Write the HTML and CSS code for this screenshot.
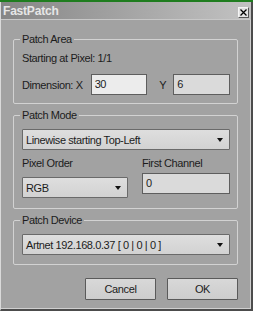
FILE: index.html
```html
<!DOCTYPE html>
<html lang="en">
  <head>
    <meta charset="UTF-8" />
    <title>FastPatch</title>
    <link rel="stylesheet" href="styles.css">
  </head>
  <body>
    <div class="top-strip"></div>
    <div class="window">
      <div class="titlebar">
        <span class="title">FastPatch</span>
        <span class="close-btn">
          <svg width="9" height="9" viewBox="0 0 9 9">
            <path d="M1.5 1.5 L7.5 7.5 M7.5 1.5 L1.5 7.5" stroke="#000" stroke-width="1.3" />
          </svg>
        </span>
      </div>
      <div class="content">
        <div class="group area-group">
          <div class="group-title">Patch Area</div>
          <p class="info">Starting at Pixel: 1/1</p>
          <div class="dim-row">
            <span class="dim-label">Dimension: X</span>
            <div class="text-input">30</div>
            <span class="y-label">Y</span>
            <div class="text-input disabled">6</div>
          </div>
        </div>

        <div class="group mode-group">
          <div class="group-title">Patch Mode</div>
          <div class="dropdown">
            <span>Linewise starting Top-Left</span>
            <span class="arrow"></span>
          </div>
          <div class="order-row">
            <div class="col col-order">
              <p class="col-label">Pixel Order</p>
              <div class="dropdown">
                <span>RGB</span>
                <span class="arrow"></span>
              </div>
            </div>
            <div class="col col-channel">
              <p class="col-label">First Channel</p>
              <div class="text-input disabled">0</div>
            </div>
          </div>
        </div>

        <div class="group device-group">
          <div class="group-title">Patch Device</div>
          <div class="dropdown">
            <span>Artnet 192.168.0.37 [ 0 | 0 | 0 ]</span>
            <span class="arrow"></span>
          </div>
        </div>

        <div class="buttons">
          <button class="btn">Cancel</button>
          <button class="btn">OK</button>
        </div>
      </div>
    </div>
  </body>
</html>
```

FILE: styles.css
```css
body {
  margin: 0;
  padding: 0;
  background-color: #a2a2a2;
  font-family: "Liberation Sans", Arial, sans-serif;
  font-size: 11px;
  letter-spacing: -0.4px;
  color: #1c1c1c;
}
.top-strip {
  height: 2px;
  background-color: #1f7d1f;
}
.window {
  box-sizing: border-box;
  width: 253px;
  height: 309px;
  background-color: #a2a2a2;
  border-left: 1px solid #dadada;
  border-right: 2px solid #4c4c4c;
  border-bottom: 2px solid #4c4c4c;
  box-shadow: inset -1px -1px 0 #cfcfcf;
}
.titlebar {
  height: 17px;
  display: flex;
  align-items: center;
  justify-content: space-between;
  padding: 0 2px 0 2px;
  background: linear-gradient(to right, #868686, #c2c2c2);
  border-bottom: 1px solid #c8c8c8;
}
.title {
  font-size: 12px;
  font-weight: bold;
  letter-spacing: -0.2px;
  color: #e6e6e6;
}
.close-btn {
  box-sizing: border-box;
  width: 11px;
  height: 11px;
  margin-top: 4px;
  display: flex;
  align-items: center;
  justify-content: center;
  background-color: #e2e2e2;
  border: 1px solid #f4f4f4;
  border-right-color: #555;
  border-bottom-color: #555;
}
.content {
  padding: 0 13px 0 12px;
}
.group {
  border: 1px solid #d2d2d2;
  border-radius: 2px;
  padding: 0 7px 0 8px;
}
.group-title {
  width: fit-content;
  margin: -8px 0 0 -2px;
  padding: 0 2px;
  line-height: 14px;
  background-color: #a2a2a2;
}
.area-group {
  margin-top: 19px;
  padding-bottom: 8px;
}
.mode-group {
  margin-top: 11px;
  padding-bottom: 10px;
}
.device-group {
  margin-top: 11px;
  padding-bottom: 9px;
}
.info {
  margin: 5px 0 0;
  line-height: 14px;
}
.dim-row {
  display: flex;
  align-items: center;
  margin-top: 9px;
}
.dim-label {
  width: 69px;
}
.y-label {
  box-sizing: border-box;
  width: 26px;
  padding-left: 12px;
}
.text-input {
  box-sizing: border-box;
  width: 57px;
  height: 21px;
  line-height: 19px;
  padding-left: 3px;
  background-color: #ececec;
  border: 1px solid #5e5e5e;
}
.text-input.disabled {
  background-color: #dadada;
}
.dropdown {
  box-sizing: border-box;
  height: 21px;
  display: flex;
  align-items: center;
  justify-content: space-between;
  padding: 0 6px 0 3px;
  background: linear-gradient(#dedede, #d2d2d2);
  border: 1px solid #6a6a6a;
  border-radius: 1px;
}
.mode-group .dropdown,
.device-group .dropdown {
  margin-top: 7px;
}
.arrow {
  width: 0;
  height: 0;
  border-left: 3.5px solid transparent;
  border-right: 3.5px solid transparent;
  border-top: 4px solid #111;
}
.order-row {
  display: flex;
  justify-content: space-between;
  margin-top: 6px;
}
.col-order {
  width: 106px;
}
.col-channel {
  width: 88px;
}
.col-channel .text-input {
  width: 88px;
}
.col-label {
  margin: 0 0 3px;
  line-height: 14px;
}
.buttons {
  display: flex;
  justify-content: flex-end;
  gap: 11px;
  margin-top: 13px;
}
.btn {
  box-sizing: border-box;
  width: 71px;
  height: 22px;
  padding: 0;
  font-family: "Liberation Sans", Arial, sans-serif;
  font-size: 11px;
  letter-spacing: -0.4px;
  color: #1c1c1c;
  background: linear-gradient(#d8d8d8, #cdcdcd);
  border: 1px solid #5a5a5a;
  border-radius: 1px;
}
```
